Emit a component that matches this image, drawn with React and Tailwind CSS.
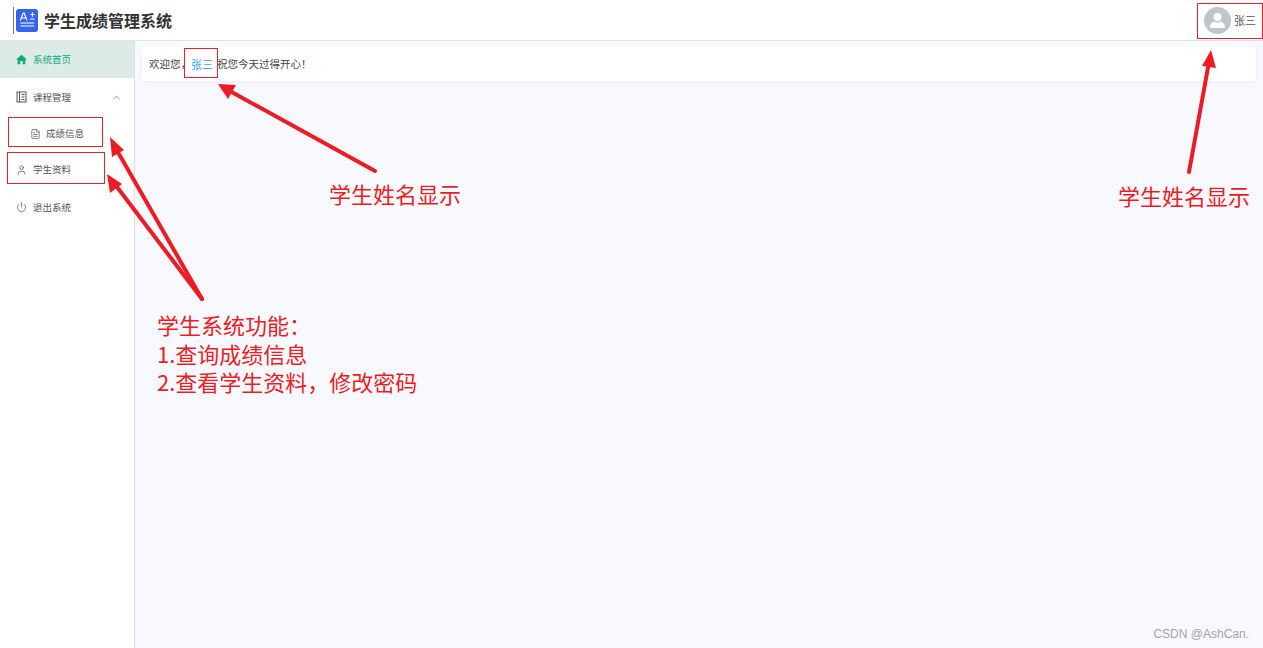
import React from 'react';
import { ChevronUp, FileText, Power, User } from 'lucide-react';

const cjk = { fontFamily: '"Noto Sans CJK SC", "Noto Sans", sans-serif' };

function HomeIcon() {
    return (
        <svg width="11" height="11" viewBox="0 0 12 12" className="text-[#12a97f]">
            <path d="M6 .8 11.6 5.6 10.8 6.5 10.2 6v5.2H7.4V7.6H4.6v3.6H1.8V6l-.6.5-.8-.9z" fill="currentColor" />
        </svg>
    );
}

function NotebookIcon() {
    return (
        <svg width="11" height="12" viewBox="0 0 11 12" fill="none" stroke="#555" strokeWidth="1">
            <rect x="1" y="1" width="9" height="10" />
            <path d="M3.5 1v10M5.5 3.5h3M5.5 6h3M5.5 8.5h3" />
        </svg>
    );
}

function Logo() {
    return (
        <svg width="22" height="23" viewBox="0 0 23 23" preserveAspectRatio="none">
            <rect width="23" height="23" rx="3" fill="#3563e9" />
            <path d="M4.5 11.5 7.5 4h1l3 7.5M5.8 9h4.4" fill="none" stroke="#fff" strokeWidth="1.2" />
            <path d="M15 5.5h4.5M17.2 3.3v4.4M14.5 10h5M4.5 14h14.5M4.5 17h14.5" fill="none" stroke="#fff" strokeWidth="1.2" />
        </svg>
    );
}

function AvatarIcon() {
    return (
        <div className="w-[27px] h-[27px] rounded-full bg-[#c0c4cc] flex items-center justify-center">
            <svg width="17" height="17" viewBox="0 0 17 17" fill="#fff">
                <circle cx="8.5" cy="5" r="4" />
                <path d="M1 16c0-4 2-6 4.5-6.5 1.8 1.2 4.2 1.2 6 0C14 10 16 12 16 16z" />
            </svg>
        </div>
    );
}

function MenuItem({ icon, label, h, active, indent, chevron }) {
    return (
        <div
            className={`flex items-center ${h} ${indent ? 'pl-[30px]' : 'pl-[16px]'} pr-[12px] ${active ? 'bg-[#dcebe6] text-[#12a97f]' : 'text-[#555]'}`}
        >
            <span className="w-[11px] flex justify-center shrink-0">{icon}</span>
            <span className={`${indent ? 'ml-[5px]' : 'ml-[6px]'} text-[9.5px] flex-1`}>{label}</span>
            {chevron && <ChevronUp size={11} strokeWidth={1.5} className="text-[#555]" />}
        </div>
    );
}

function Arrows() {
    return (
        <svg width="1263" height="648" className="absolute inset-0 pointer-events-none">
            <g stroke="#ed1c24" strokeWidth="4" strokeLinecap="round" fill="none">
                <path d="M375 171 228 90" />
                <path d="M1189 172 1209 62" />
                <path d="M202 299 115 147" />
                <path d="M202 299 114 183" />
            </g>
            <g fill="#ed1c24">
                <path d="M218 84 236 85 228 99z" />
                <path d="M1211 50 1216 68 1202 66z" />
                <path d="M110 137 124 150 112 157z" />
                <path d="M107 174 122 184 110 193z" />
            </g>
        </svg>
    );
}

function RedBox({ className }) {
    return <div className={`absolute border border-[#e8212b] pointer-events-none ${className}`} />;
}

function Note({ className, children }) {
    return (
        <div className={`absolute text-[22px] leading-[28.5px] text-[#ed1c24] whitespace-nowrap ${className}`}>
            {children}
        </div>
    );
}

export default function App() {
    return (
        <div className="relative w-[1263px] h-[648px] overflow-hidden bg-white flex flex-col" style={cjk}>
            {/* top bar */}
            <header className="h-[41px] shrink-0 flex items-center justify-between border-b border-[#dfe1e6] bg-white">
                <div className="flex items-center">
                    <div className="ml-[13px] w-px h-[27px] bg-[#777]" />
                    <div className="ml-[2px] flex"><Logo /></div>
                    <span className="ml-[6px] text-[16px] font-bold text-[#333]">学生成绩管理系统</span>
                </div>
                <div className="flex items-center mr-[7px]">
                    <AvatarIcon />
                    <span className="ml-[3px] text-[11px] text-[#555]">张三</span>
                </div>
            </header>

            <div className="flex flex-1 min-h-0">
                {/* side menu */}
                <aside className="w-[135px] shrink-0 border-r border-[#dcdfe6] bg-white">
                    <MenuItem icon={<HomeIcon />} label="系统首页" h="h-[37px]" active />
                    <MenuItem icon={<NotebookIcon />} label="课程管理" h="h-[38px]" chevron />
                    <MenuItem icon={<FileText size={14} strokeWidth={1.4} className="text-[#444]" />} label="成绩信息" h="h-[35px]" indent />
                    <MenuItem icon={<User size={14} strokeWidth={1.4} className="text-[#444]" />} label="学生资料" h="h-[37px]" />
                    <MenuItem icon={<Power size={14} strokeWidth={1.4} className="text-[#444]" />} label="退出系统" h="h-[38px]" />
                </aside>

                {/* main */}
                <main className="flex-1 bg-[#f8f9fe] pt-[6px] pl-[7px] pr-[7px]">
                    <div className="h-[34px] bg-white rounded-[3px] shadow-[0_1px_4px_rgba(0,0,0,0.06)] flex items-center pl-[7px] text-[10.5px] text-[#444]">
                        <span>{'欢迎您\uFF0C'}</span>
                        <span className="mr-[4px] text-[11px] text-[#1e9fff]">张三</span>
                        <span>{'祝您今天过得开心\uFF01'}</span>
                    </div>
                </main>
            </div>

            {/* annotations */}
            <RedBox className="left-[184px] top-[48px] w-[34px] h-[30px]" />
            <RedBox className="left-[1197px] top-[3px] w-[66px] h-[36px]" />
            <RedBox className="left-[8px] top-[117px] w-[95px] h-[30px]" />
            <RedBox className="left-[7px] top-[152px] w-[98px] h-[32px]" />
            <Arrows />
            <Note className="left-[329px] top-[179px]">学生姓名显示</Note>
            <Note className="left-[1118px] top-[181px]">学生姓名显示</Note>
            <Note className="left-[157px] top-[310px]">
                <div>{'学生系统功能\uFF1A'}</div>
                <div>1.查询成绩信息</div>
                <div>{'2.查看学生资料\uFF0C修改密码'}</div>
            </Note>
            <div className="absolute right-[14px] bottom-[5px] text-[12px] text-[#a3a3ab] font-['Liberation_Sans',sans-serif]">CSDN @AshCan.</div>
        </div>
    );
}
